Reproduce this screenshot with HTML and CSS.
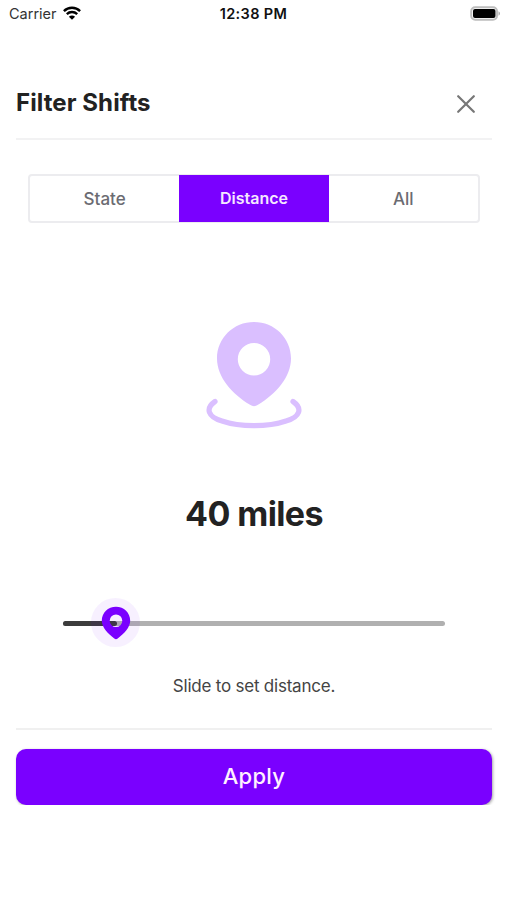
FILE: index.html
```html
<!DOCTYPE html>
<html lang="en">
<head>
<meta charset="utf-8">
<title>Filter Shifts</title>
<link rel="stylesheet" href="styles.css">
</head>
<body>
<div class="status">
  <div class="carrier"><span class="carrier-name">Carrier</span>
    <svg width="18" height="14" viewBox="0 0 18 14" fill="none" stroke="#000" stroke-width="2.4"><path d="M.9 5.1C5.4.7 12.6.7 17.1 5.1M3.8 8.1c3-2.8 7.4-2.8 10.4 0"/><path d="M9 13.8 5.9 10.7c1.8-1.6 4.4-1.6 6.2 0Z" fill="#000" stroke="none"/></svg>
  </div>
  <span class="time">12:38 PM</span>
  <svg class="battery" width="31" height="15" viewBox="0 0 31 15"><rect x="1.200" y="1.200" width="25.800" height="12.600" rx="4" fill="#fff" stroke="#bdbdbd" stroke-width="2"/><rect x="3" y="3" width="22.500" height="9" rx="2" fill="#000"/><path d="M28.500 5.300c2 .8 2 3.600 0 4.400Z" fill="#aaa"/></svg>
</div>
<main class="sheet">
  <header class="header">
    <h1 class="title">Filter Shifts</h1>
    <button class="close" aria-label="Close"><svg width="18" height="18" viewBox="0 0 18 18" stroke="#777" stroke-width="2.200" stroke-linecap="round"><path d="M1.200 1.200 16.800 16.800M16.800 1.200 1.200 16.800"/></svg></button>
  </header>
  <nav class="tabs">
    <button class="tab">State</button>
    <button class="tab active">Distance</button>
    <button class="tab">All</button>
  </nav>
  <svg class="pin" width="96" height="108" viewBox="0 0 96 108"><path fill="#dabfff" fill-rule="evenodd" d="M48 1C27.500 1 11 17 11 37.500 11 56 26 73 44 83.800Q48 86.500 52 83.800C70 73 85 56 85 37.500 85 17 68.500 1 48 1Zm0 21a16.200 16.200 0 1 1 0 32.400 16.200 16.200 0 0 1 0-32.400Z"/><path d="M9 80.500C-1 87.500 2 96 16 100c18 6.200 46 6.200 64 0C94 96 97 87.500 87 80.500" fill="none" stroke="#dabfff" stroke-width="5.200" stroke-linecap="round"/></svg>
  <div class="miles">40 miles</div>
  <div class="slider">
    <div class="fill"></div>
    <div class="thumb"><svg width="30" height="34" viewBox="0 0 30 34"><path fill="#7a00ff" fill-rule="evenodd" d="M15 .8C7 .8.8 7 .8 14.500c0 7 6 13 12.500 18q1.700 1.300 3.400 0C23.200 27.500 29.200 21.500 29.200 14.500 29.200 7 23 .8 15 .8Zm0 7.700a6.300 6.300 0 1 1 0 12.600 6.300 6.300 0 0 1 0-12.600Z"/></svg></div>
  </div>
  <p class="hint">Slide to set distance.</p>
  <footer class="footer"><button class="apply">Apply</button></footer>
</main>
</body>
</html>
```
FILE: styles.css
```css
* { box-sizing: border-box; }
body { margin: 0; background: #fff; color: #222; font-family: Inter, "Liberation Sans", sans-serif; }
button { font: inherit; border: 0; padding: 0; background: none; }
svg { display: block; }
.status { display: grid; grid-template-columns: 1fr auto 1fr; align-items: center; height: 28px; padding: 0 6px 2px; }
.carrier { display: flex; align-items: center; gap: 6px; padding-left: 3px; font-size: 14.5px; color: #333; }
.time { font-size: 14.5px; font-weight: 600; letter-spacing: .35px; color: #111; }
.battery { justify-self: end; }
.sheet { display: flex; flex-direction: column; margin: 0 15px 0 16px; }
.header { display: flex; justify-content: space-between; align-items: center; height: 112px; padding: 40px 17.5px 0 0; border-bottom: 2px solid #f2f2f3; }
.title { margin: 0; font-size: 24px; line-height: 30px; font-weight: 700; letter-spacing: .08px; }
.close { padding-top: 2px; }
.tabs { display: grid; grid-template-columns: 1fr 1fr 1fr; height: 49px; margin: 34px 12px 0; border: 2px solid #ececef; border-radius: 4px; }
.tab { display: flex; align-items: center; justify-content: center; font-size: 17px; font-weight: 500; color: #6b6b72; }
.active { background: #7a00ff; color: #f5e7ff; margin: -1px 0; padding-bottom: 2px; font-size: 16px; font-weight: 600; }
.pin { align-self: center; margin-top: 98px; }
.miles { margin-top: 63px; height: 44px; line-height: 44px; text-align: center; font-size: 34px; font-weight: 700; letter-spacing: -.6px; }
.slider { position: relative; height: 5px; margin: 85px 47px 0; border-radius: 3px; background: #b0b0b0; }
.fill { width: 54px; height: 5px; border-radius: 3px; background: #3c3c3c; }
.thumb { position: absolute; left: 28px; top: -23px; display: flex; justify-content: center; align-items: center; width: 49px; height: 49px; border-radius: 50%; background: rgba(122, 0, 255, .06); }
.hint { margin: 47px 0 0; height: 26px; line-height: 26px; text-align: center; font-size: 17px; letter-spacing: -.22px; color: #444; }
.footer { margin-top: 29px; padding-top: 19px; border-top: 2px solid #f0f0f0; }
.apply { display: block; width: 100%; height: 56px; padding-bottom: 3px; border-radius: 10px; background: #7a00ff; color: #fff0ff; font-size: 22px; font-weight: 500; letter-spacing: .3px; box-shadow: 1px 1px 3px rgba(0, 0, 0, .35); }
```
